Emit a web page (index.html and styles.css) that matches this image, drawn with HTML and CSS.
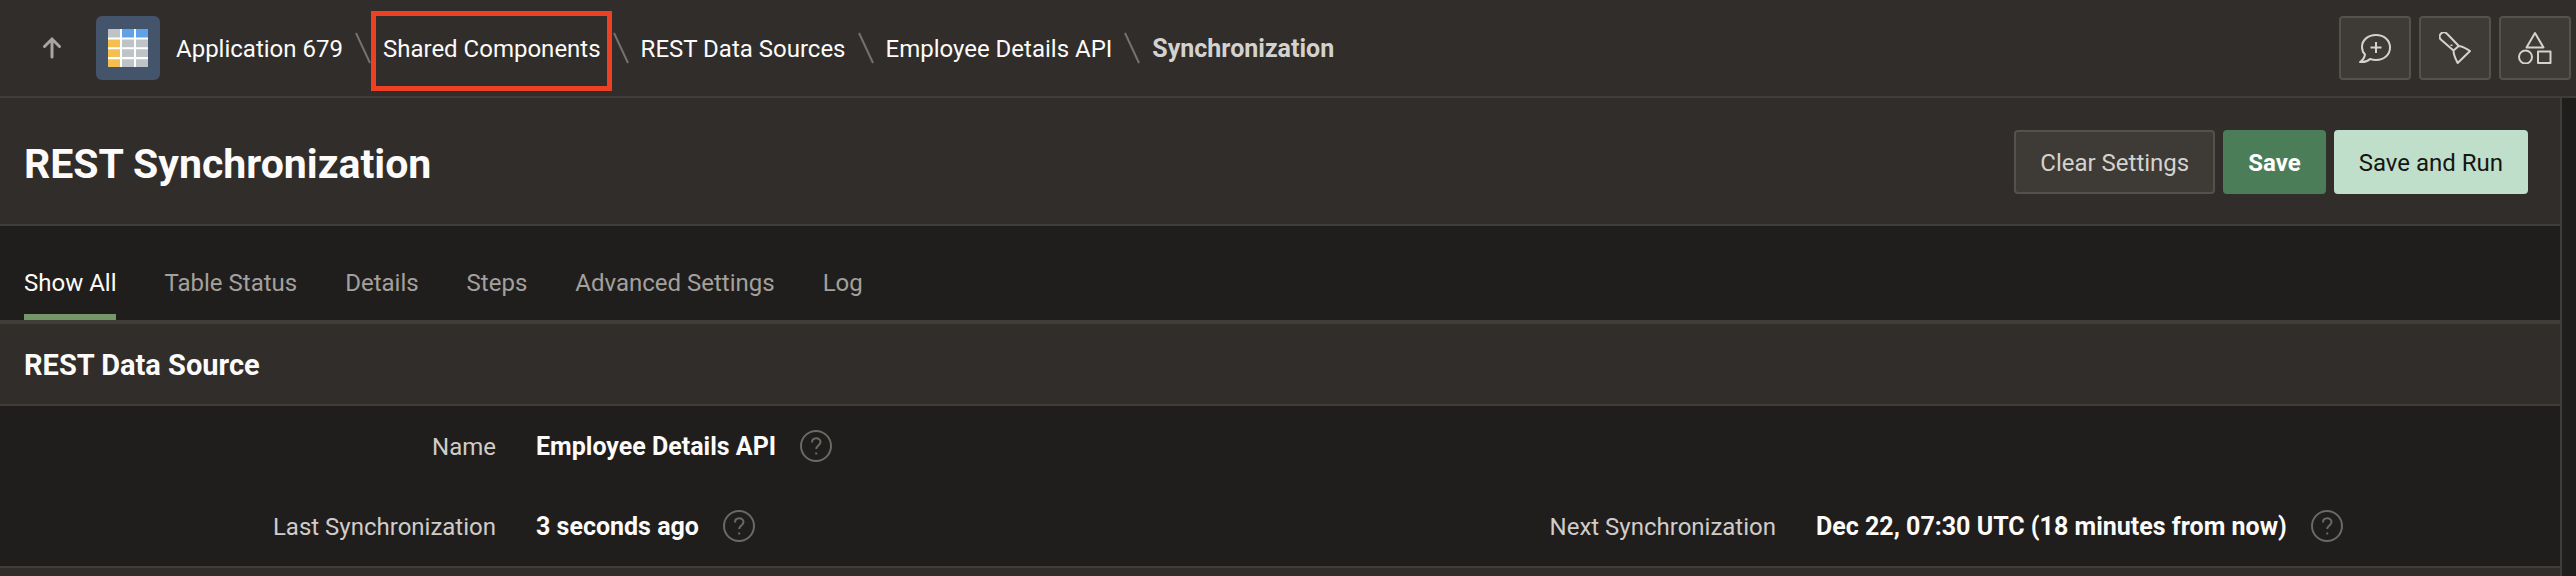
FILE: index.html
```html
<!DOCTYPE html>
<html lang="en">
<head>
<meta charset="utf-8">
<title>REST Synchronization</title>
<link rel="stylesheet" href="styles.css">
</head>
<body>
<div class="app">
  <header class="topbar">
    <a class="up-link" href="#" aria-label="Up one level">
      <svg width="24" height="24" viewBox="0 0 24 24"><path d="M12 21V3.500M4.500 10.500 12 3l7.500 7.500" /></svg>
    </a>
    <span class="app-icon">
      <svg width="40" height="38" viewBox="0 0 40 38">
        <rect width="40" height="38" rx="1.500" fill="#fff"/>
        <path fill="#bdc3c7" d="M1.500 0H12v8.500H0v-7Q0 0 1.500 0zM14 10.500h12v7.700H14zM28 10.500h12v7.700H28zM14 20.300h12v7.700H14zM28 20.300h12v7.700H28zM14 30.300h12V38H14zM28 30.300h12v6.200q0 1.500-1.500 1.500H28z"/>
        <path fill="#5fa2e8" d="M14 0h12v8.500H14zM28 0h10.500Q40 0 40 1.500v7H28z"/>
        <path fill="#f5bf4f" d="M0 10.500h12v7.700H0zM0 20.300h12v7.700H0zM0 30.300h12V38H1.500Q0 38 0 36.500z"/>
      </svg>
    </span>
    <nav class="breadcrumb" aria-label="Breadcrumb">
      <a href="#">Application 679</a>
      <svg class="sep" viewBox="0 0 16 32"><path d="M1 1l14 30"/></svg>
      <a class="highlighted" href="#">Shared Components</a>
      <svg class="sep" viewBox="0 0 16 32"><path d="M1 1l14 30"/></svg>
      <a href="#">REST Data Sources</a>
      <svg class="sep" viewBox="0 0 16 32"><path d="M1 1l14 30"/></svg>
      <a href="#">Employee Details API</a>
      <svg class="sep" viewBox="0 0 16 32"><path d="M1 1l14 30"/></svg>
      <span class="current" aria-current="page">Synchronization</span>
    </nav>
    <div class="tools">
      <button class="tool" type="button" aria-label="Feedback">
        <svg width="32" height="32" viewBox="0 0 32 32"><path d="M17 3C9 3 3 8 3 15c0 3 1 5.500 3 7.500C5.500 26 4 28 1 30c5 .5 8-1 10-3 2 .6 4 .9 6 .9 8 0 14-5 14-12.400S25 3 17 3zM17 10v11M11.500 15.500h11"/></svg>
      </button>
      <button class="tool" type="button" aria-label="Spotlight search">
        <svg width="32" height="32" viewBox="0 0 32 32"><path d="M14.500 18.500 1.800 7.500A4.200 4.200 0 0 1 8 1.800l11.800 12.200zM14.500 18.500c0 5 2 8 4.200 12.500L31 19c-5-3.500-7.500-4.500-11.200-5M12.500 12.500v1.500"/></svg>
      </button>
      <button class="tool" type="button" aria-label="Components">
        <svg width="34" height="32" viewBox="0 0 34 32"><path d="M17 1l8.500 14.500h-17zM20 19.500h12.500V31H20z"/><circle cx="7.500" cy="25" r="6.500"/></svg>
      </button>
    </div>
  </header>

  <main class="page">
    <div class="titlebar">
      <h1>REST Synchronization</h1>
      <div class="actions">
        <button class="btn" type="button">Clear Settings</button>
        <button class="btn btn-save" type="button">Save</button>
        <button class="btn btn-run" type="button">Save and Run</button>
      </div>
    </div>
    <nav class="tabs" aria-label="Regions">
      <a class="active" href="#">Show All</a>
      <a href="#">Table Status</a>
      <a href="#">Details</a>
      <a href="#">Steps</a>
      <a href="#">Advanced Settings</a>
      <a href="#">Log</a>
    </nav>
    <section class="region">
      <h2>REST Data Source</h2>
      <div class="fields">
        <div class="field">
          <span class="label">Name</span>
          <span class="value">Employee Details API</span>
          <button class="help" type="button" aria-label="Help: Name"><svg width="32" height="32" viewBox="0 0 32 32"><circle cx="16" cy="16" r="15"/><path d="M12 12.500c0-5.500 8.500-5.500 8.500-.5 0 3.500-4.300 3.500-4.300 7M16.200 22.500v2"/></svg></button>
        </div>
        <div class="field first">
          <span class="label">Last Synchronization</span>
          <span class="value">3 seconds ago</span>
          <button class="help" type="button" aria-label="Help: Last Synchronization"><svg width="32" height="32" viewBox="0 0 32 32"><circle cx="16" cy="16" r="15"/><path d="M12 12.500c0-5.500 8.500-5.500 8.500-.5 0 3.500-4.300 3.500-4.300 7M16.200 22.500v2"/></svg></button>
        </div>
        <div class="field">
          <span class="label">Next Synchronization</span>
          <span class="value">Dec 22, 07:30 UTC (18 minutes from now)</span>
          <button class="help" type="button" aria-label="Help: Next Synchronization"><svg width="32" height="32" viewBox="0 0 32 32"><circle cx="16" cy="16" r="15"/><path d="M12 12.500c0-5.500 8.500-5.500 8.500-.5 0 3.500-4.300 3.500-4.300 7M16.200 22.500v2"/></svg></button>
        </div>
      </div>
    </section>
    <section class="region-next"></section>
  </main>
</div>
</body>
</html>
```
FILE: styles.css
```css
* { box-sizing: border-box; }

body {
  margin: 0;
  background: #201e1c;
  color: #fcfbfa;
  font-family: Roboto, "Noto Sans", sans-serif;
  font-size: 24px;
  line-height: 32px;
}

a { color: inherit; text-decoration: none; }
button { font: inherit; cursor: pointer; }
svg { display: block; fill: none; flex: none; }

.app {
  display: flex;
  flex-direction: column;
  height: 100vh;
  overflow: hidden;
}

.topbar {
  display: flex;
  align-items: center;
  flex: none;
  padding: 16px 5px 16px 40px;
  background: #312d2a;
  border-bottom: 2px solid #403c38;
}

.up-link svg { stroke: #a8a5a3; stroke-width: 3; stroke-linecap: round; }

.app-icon {
  display: grid;
  place-items: center;
  width: 64px;
  height: 64px;
  margin: 0 16px 0 32px;
  border-radius: 6px;
  background: #44546a;
}

.breadcrumb { display: flex; align-items: center; gap: 12px; white-space: nowrap; }
.breadcrumb a, .current { padding-top: 2px; }
.sep { width: 16px; height: 32px; stroke: #75716e; stroke-width: 2; }
.current { color: #d4d2cf; font-size: 25px; font-weight: 700; }

.highlighted { position: relative; }
.highlighted::after {
  content: "";
  position: absolute;
  inset: -20px -11px -26px -12px;
  border: 5px solid #ee4023;
  pointer-events: none;
}

.tools { display: flex; gap: 8px; margin-left: auto; }
.tool {
  display: grid;
  place-items: center;
  width: 72px;
  height: 64px;
  padding: 0;
  border: 2px solid #55514c;
  border-radius: 4px;
  background: #3e3a35;
}
.tool svg { stroke: #d4d2cf; stroke-width: 2; stroke-linejoin: round; }

.page {
  flex: 1;
  min-height: 0;
  margin-right: 14px;
  border-right: 2px solid #403c38;
  overflow: hidden;
}

.titlebar {
  display: flex;
  align-items: center;
  justify-content: space-between;
  padding: 32px 32px 30px 24px;
  background: #312d2a;
  border-bottom: 2px solid #403c38;
}
h1 { margin: 0; padding-top: 4px; font-size: 41px; line-height: 48px; font-weight: 700; }

.actions { display: flex; gap: 8px; }
.btn {
  padding: 15px 24px 13px;
  border: 2px solid #55514c;
  border-radius: 4px;
  background: #3e3a35;
  color: #d4d2cf;
  white-space: nowrap;
}
.btn-save { border-color: #4b7e58; background: #4b7e58; color: #fff; font-weight: 700; }
.btn-run { border-color: #bfdfcb; background: #bfdfcb; color: #161513; }
.btn-save, .btn-run { padding-inline: 23px; }

.tabs {
  display: flex;
  gap: 48px;
  padding: 0 24px;
  border-bottom: 4px solid #403c38;
  white-space: nowrap;
}
.tabs a { padding: 41px 0 15px; border-bottom: 6px solid transparent; color: #a3a09d; }
.tabs .active { border-color: #759869; color: #fcfbfa; }

h2 {
  margin: 0;
  padding: 23px 24px 21px;
  background: #312d2a;
  border-bottom: 2px solid #403c38;
  font-size: 29px;
  line-height: 36px;
  font-weight: 700;
}

.fields {
  display: grid;
  grid-template-columns: 1fr 1fr;
  row-gap: 48px;
  padding: 24px 0;
}
.field { display: flex; align-items: center; height: 32px; white-space: nowrap; }
.first { grid-column: 1; }
.label { width: 38.75%; flex: none; padding-top: 2px; text-align: right; color: #cfccca; }
.value { margin: 0 24px 0 40px; padding-top: 2px; font-size: 25px; font-weight: 700; }
.help { padding: 0; border: 0; background: none; }
.help svg { stroke: #6b6865; stroke-width: 2; }

.region-next { height: 80px; background: #312d2a; border-top: 2px solid #403c38; }
```
